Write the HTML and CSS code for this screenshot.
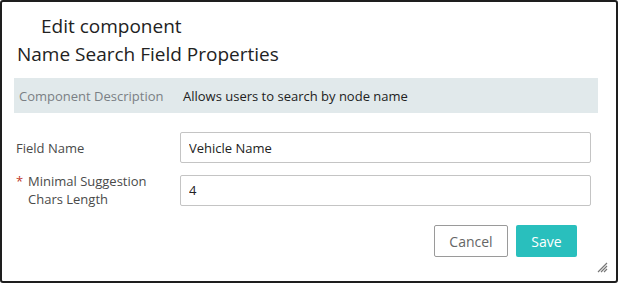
FILE: index.html
```html
<!DOCTYPE html>
<html lang="en">
<head>
    <meta charset="UTF-8">
    <title>Edit component</title>
    <link rel="stylesheet" href="styles.css">
</head>
<body>
    <div class="dialog">
        <div class="dialog-title">Edit component</div>
        <h2 class="dialog-subtitle">Name Search Field Properties</h2>

        <div class="description-row">
            <span class="description-label">Component Description</span>
            <span class="description-text">Allows users to search by node name</span>
        </div>

        <form class="props-form">
            <div class="form-row">
                <label class="form-label" for="field-name">Field Name</label>
                <input class="form-input" id="field-name" type="text" value="Vehicle Name">
            </div>
            <div class="form-row">
                <label class="form-label required" for="min-chars">Minimal Suggestion Chars Length</label>
                <input class="form-input" id="min-chars" type="text" value="4">
            </div>
            <div class="form-actions">
                <button type="button" class="btn btn-cancel">Cancel</button>
                <button type="button" class="btn btn-save">Save</button>
            </div>
        </form>

        <svg class="resize-grip" width="12" height="12" viewBox="0 0 12 12">
            <path d="M11 2 L2 11 M11 5 L5 11 M11 8 L8 11" stroke="#777" stroke-width="1.2" fill="none"/>
        </svg>
    </div>
</body>
</html>
```

FILE: styles.css
```css
html, body {
    margin: 0;
    padding: 0;
}
body {
    font-family: "Open Sans", "Noto Sans", sans-serif;
    background-color: #fff;
    color: #222;
}
.dialog {
    position: relative;
    box-sizing: border-box;
    width: 618px;
    height: 283px;
    border: 2px solid #1e1e1e;
    border-radius: 3px;
    padding: 12px 18px 0 12px;
}
.dialog-title {
    font-size: 19px;
    line-height: 24px;
    padding-left: 27px;
    color: #222;
}
.dialog-subtitle {
    margin: 4px 0 0 3px;
    font-size: 19px;
    font-weight: normal;
    line-height: 25px;
    color: #222;
}
.description-row {
    display: flex;
    align-items: center;
    height: 35px;
    margin-top: 11px;
    background-color: #e1e9eb;
    font-size: 13px;
}
.description-label {
    color: #7a7f84;
    padding-left: 5px;
    width: 164px;
}
.description-text {
    color: #222;
}
.props-form {
    margin-top: 19px;
    padding-right: 7px;
}
.form-row {
    display: flex;
    align-items: center;
    margin-bottom: 9px;
}
.form-label {
    width: 166px;
    flex-shrink: 0;
    padding-left: 2px;
    font-size: 13px;
    line-height: 18px;
    color: #4a4a4a;
    box-sizing: border-box;
}
.form-label.required {
    padding-left: 14px;
    padding-right: 22px;
    position: relative;
}
.form-label.required::before {
    content: "*";
    color: #c0392b;
    position: absolute;
    left: 2px;
    top: 0;
}
.form-input {
    flex: 1;
    height: 31px;
    box-sizing: border-box;
    border: 1px solid #c4c4c4;
    border-radius: 2px;
    padding: 0 8px;
    font-family: inherit;
    font-size: 13px;
    color: #222;
}
.form-actions {
    display: flex;
    justify-content: flex-end;
    gap: 8px;
    margin-top: 17px;
    padding-right: 14px;
}
.btn {
    height: 32px;
    font-family: inherit;
    font-size: 14px;
    border-radius: 2px;
    cursor: pointer;
}
.btn-cancel {
    width: 74px;
    background-color: #fff;
    border: 1px solid #9a9a9a;
    color: #666;
}
.btn-save {
    width: 61px;
    background-color: #29bfbd;
    border: none;
    color: #fff;
}
.resize-grip {
    position: absolute;
    right: 8px;
    bottom: 8px;
}
```
